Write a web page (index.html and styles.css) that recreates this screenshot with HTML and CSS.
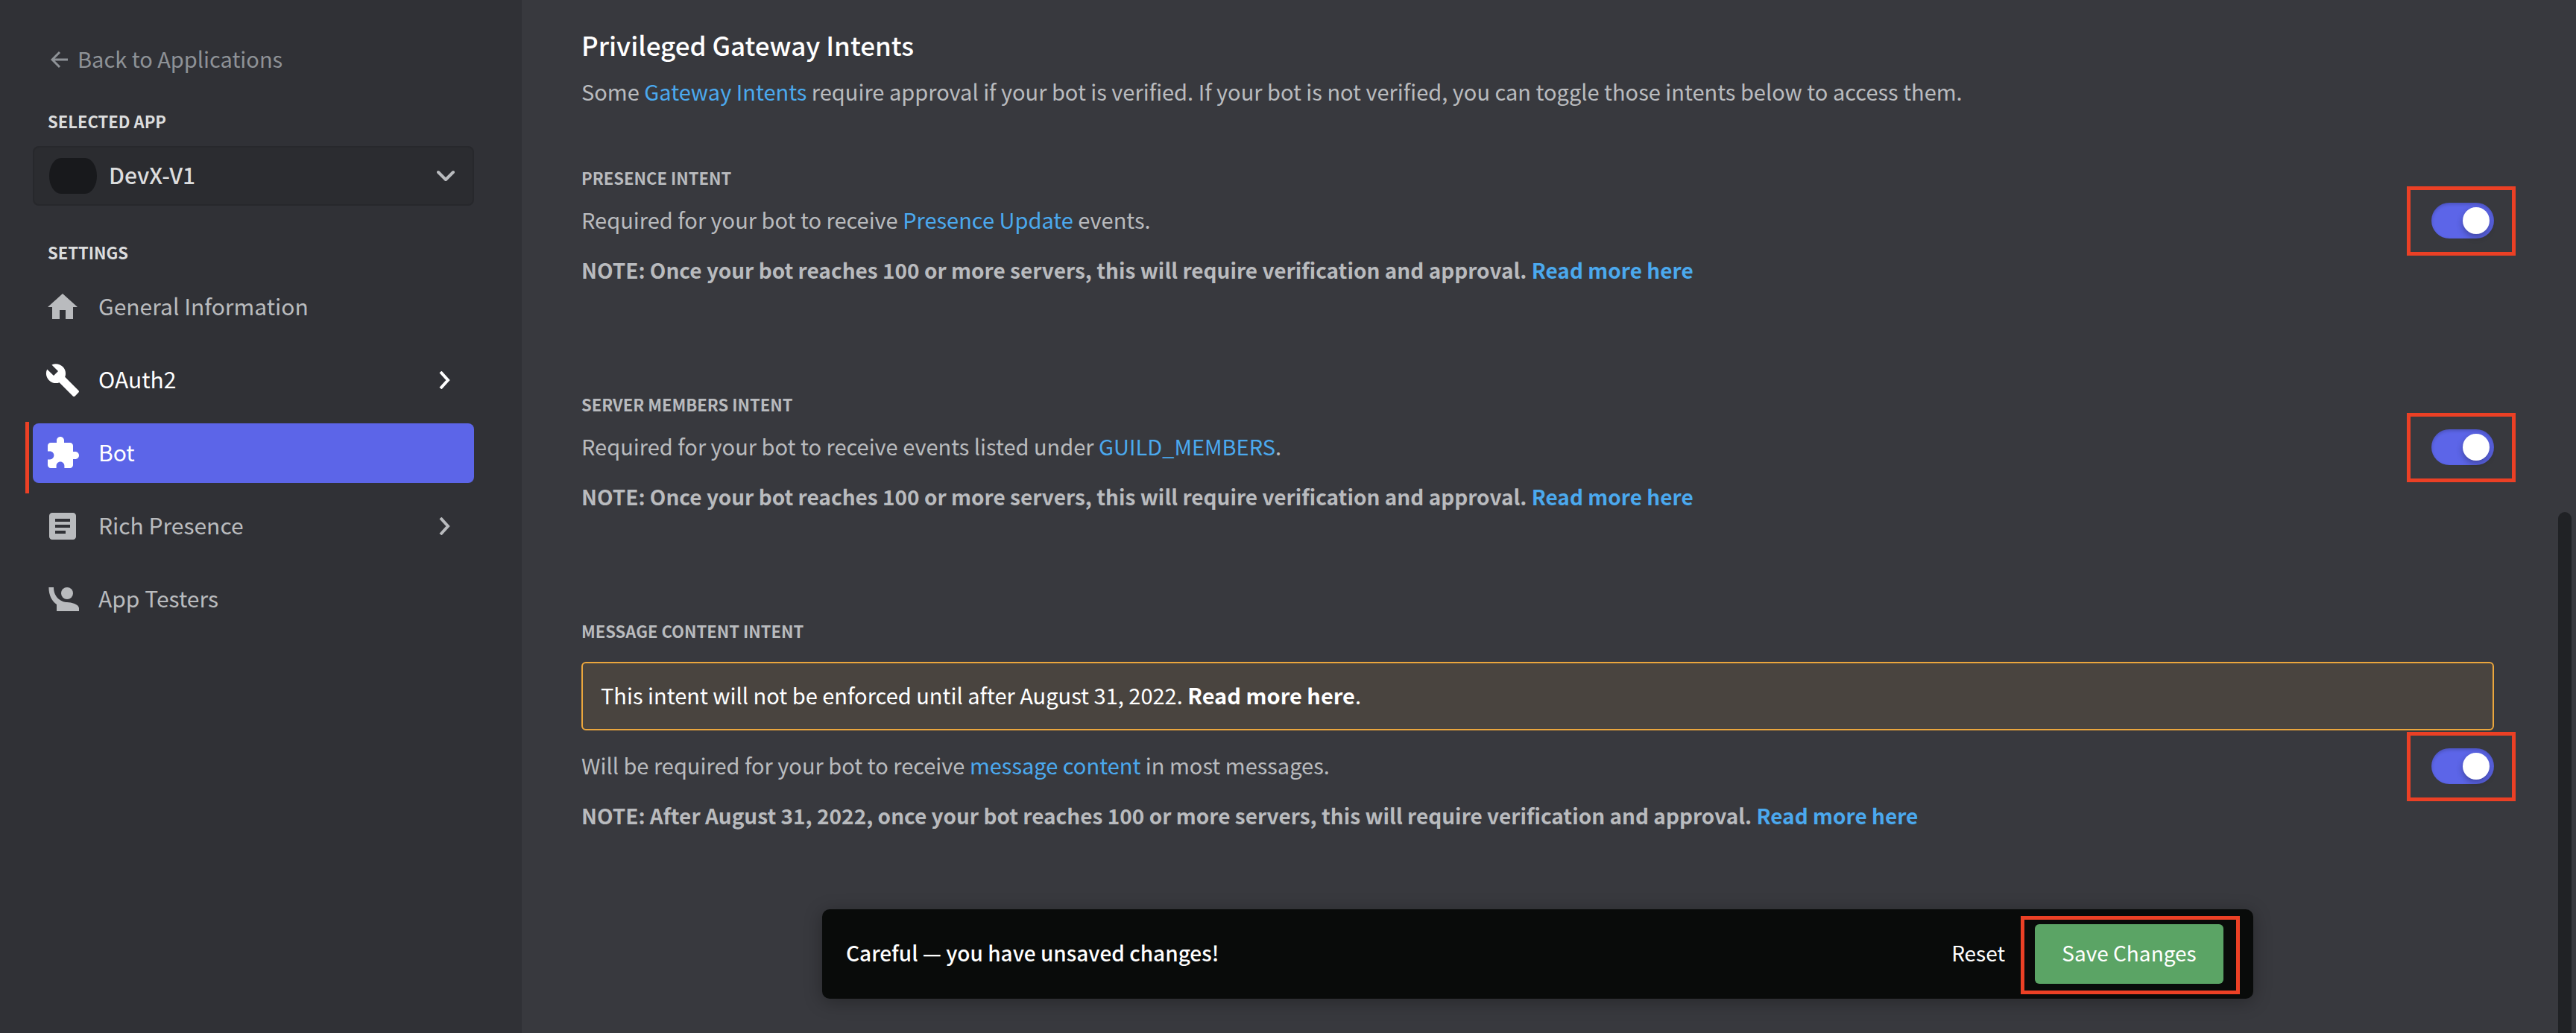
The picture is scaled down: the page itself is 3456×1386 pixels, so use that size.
FILE: index.html
```html
<!DOCTYPE html>
<html lang="en">
<head>
<meta charset="utf-8">
<meta name="viewport" content="width=device-width, initial-scale=1">
<title>Bot settings</title>
<link rel="stylesheet" href="styles.css">
</head>
<body>
<div class="app">
  <aside class="sidebar">
    <a class="back" href="#">
      <svg class="back-arrow" viewBox="0 0 24 24" aria-hidden="true"><path d="M23 12H2M12 2 2 12l10 10"/></svg>
      <span class="label">Back to Applications</span>
    </a>

    <h2 class="side-heading">Selected App</h2>
    <button class="app-picker" type="button" aria-haspopup="listbox">
      <span class="avatar"></span>
      <span class="label">DevX-V1</span>
      <svg class="picker-arrow" viewBox="0 0 24 16" aria-hidden="true"><path d="m2 3 10 10L22 3"/></svg>
    </button>

    <h2 class="side-heading">Settings</h2>
    <nav class="nav">
      <a class="nav-item" href="#">
        <svg class="icon" viewBox="0 0 24 24" aria-hidden="true"><path d="M10 20v-6h4v6h5v-8h3L12 3 2 12h3v8z"/></svg>
        <span class="label">General Information</span>
      </a>
      <a class="nav-item nav-item-bright" href="#">
        <svg class="icon" viewBox="0 0 24 24" aria-hidden="true"><path d="M22.7 19l-9.1-9.1c.9-2.3.4-5-1.5-6.9-2-2-5-2.4-7.4-1.3L9 6 6 9 1.6 4.7C.4 7.1.9 10.1 2.9 12.1c1.9 1.9 4.6 2.4 6.9 1.5l9.1 9.1c.4.4 1 .4 1.4 0l2.3-2.3c.5-.4.5-1.1.1-1.4z"/></svg>
        <span class="label">OAuth2</span>
        <svg class="more" viewBox="0 0 16 24" aria-hidden="true"><path d="m3 1 10 11L3 23"/></svg>
      </a>
      <a class="nav-item nav-item-active" href="#" aria-current="page">
        <svg class="icon" viewBox="0 0 24 24" aria-hidden="true"><path d="M20.5 11H19V7c0-1.1-.9-2-2-2h-4V3.5C13 2.12 11.88 1 10.5 1S8 2.12 8 3.5V5H4c-1.1 0-1.99.9-1.99 2v3.8H3.5c1.49 0 2.7 1.21 2.7 2.7s-1.21 2.7-2.7 2.7H2V20c0 1.1.9 2 2 2h3.8v-1.5c0-1.49 1.21-2.7 2.7-2.7 1.49 0 2.7 1.21 2.7 2.7V22H17c1.1 0 2-.9 2-2v-4h1.5c1.38 0 2.5-1.12 2.5-2.5S21.88 11 20.5 11z"/></svg>
        <span class="label">Bot</span>
      </a>
      <a class="nav-item" href="#">
        <svg class="icon" viewBox="0 0 24 24" aria-hidden="true"><path d="M19 3H5c-1.1 0-2 .9-2 2v14c0 1.1.9 2 2 2h14c1.1 0 2-.9 2-2V5c0-1.1-.9-2-2-2zm-5 14H7v-2h7v2zm3-4H7v-2h10v2zm0-4H7V7h10v2z"/></svg>
        <span class="label">Rich Presence</span>
        <svg class="more" viewBox="0 0 16 24" aria-hidden="true"><path d="m3 1 10 11L3 23"/></svg>
      </a>
      <a class="nav-item" href="#">
        <svg class="icon" viewBox="0 0 24 24" aria-hidden="true"><circle cx="15" cy="8" r="4"/><path d="M23 20v-2c0-2.66-5.33-4-8-4-3.33 0-9-2.7-9-10H2.7C2.7 9.500 5 13.500 8 15.500V20z"/></svg>
        <span class="label">App Testers</span>
      </a>
    </nav>
  </aside>

  <main class="main">
    <h1 class="title">Privileged Gateway Intents</h1>
    <p class="label intro">Some <a href="#">Gateway Intents</a> require approval if your bot is verified. If your bot is not verified, you can toggle those intents below to access them.</p>

    <div class="intents">
      <section class="intent">
        <h3 class="intent-name" id="presence">Presence Intent</h3>
        <div class="intent-row">
          <p class="label">Required for your bot to receive <a href="#">Presence Update</a> events.</p>
          <div class="marked"><input class="switch" type="checkbox" role="switch" aria-labelledby="presence" checked></div>
        </div>
        <p class="label note">NOTE: Once your bot reaches 100 or more servers, this will require verification and approval. <a href="#">Read more here</a></p>
      </section>

      <section class="intent">
        <h3 class="intent-name" id="members">Server Members Intent</h3>
        <div class="intent-row">
          <p class="label">Required for your bot to receive events listed under <a href="#">GUILD_MEMBERS</a>.</p>
          <div class="marked"><input class="switch" type="checkbox" role="switch" aria-labelledby="members" checked></div>
        </div>
        <p class="label note">NOTE: Once your bot reaches 100 or more servers, this will require verification and approval. <a href="#">Read more here</a></p>
      </section>

      <section class="intent">
        <h3 class="intent-name" id="content">Message Content Intent</h3>
        <div class="banner">
          <p class="label">This intent will not be enforced until after August 31, 2022. <a href="#">Read more here</a>.</p>
        </div>
        <div class="intent-row">
          <p class="label">Will be required for your bot to receive <a href="#">message content</a> in most messages.</p>
          <div class="marked"><input class="switch" type="checkbox" role="switch" aria-labelledby="content" checked></div>
        </div>
        <p class="label note">NOTE: After August 31, 2022, once your bot reaches 100 or more servers, this will require verification and approval. <a href="#">Read more here</a></p>
      </section>
    </div>

    <div class="save-bar">
      <p class="label save-text">Careful — you have unsaved changes!</p>
      <button class="reset" type="button">Reset</button>
      <div class="marked marked-save"><button class="save" type="button">Save Changes</button></div>
    </div>
  </main>
</div>
<div class="scroll-thumb"></div>
</body>
</html>
```
FILE: styles.css
```css
* {
  box-sizing: border-box;
}

body {
  margin: 0;
  background: #38393e;
  color: #b9bbbe;
  font-family: "Noto Sans CJK SC", "Noto Sans", sans-serif;
  font-size: 29px;
  line-height: 36px;
}

h1,
h2,
h3,
p {
  margin: 0;
}

a {
  color: #4ba9ee;
  text-decoration: none;
}

button {
  border: 0;
  font: inherit;
  cursor: pointer;
}

/* The face sits low in its line box; the padding below centres it */
.label {
  padding-bottom: 4px;
}

.app {
  display: grid;
  grid-template-columns: 700px 1fr;
  min-height: 100vh;
}

/* Sidebar */

.sidebar {
  padding: 60px 64px 60px 44px;
  background: #303136;
}

.back {
  display: flex;
  align-items: center;
  gap: 12px;
  padding-left: 24px;
  color: #8e9297;
}

.back-arrow {
  width: 24px;
  height: 24px;
  fill: none;
  stroke: currentColor;
  stroke-width: 3;
}

.side-heading {
  margin: 46px 0 18px 20px;
  color: #dcddde;
  font-size: 22px;
  font-weight: 700;
  line-height: 32px;
  text-transform: uppercase;
}

.app-picker {
  display: flex;
  align-items: center;
  gap: 16px;
  width: 100%;
  height: 80px;
  padding: 0 24px 0 20px;
  border: 2px solid #27282c;
  border-radius: 8px;
  background: #2b2c30;
  color: #dcddde;
  font-size: 30px;
  font-weight: 500;
}

.avatar {
  width: 64px;
  height: 48px;
  border-radius: 16px / 24px;
  background: #18191c;
}

.picker-arrow {
  width: 24px;
  height: 16px;
  margin-left: auto;
  fill: none;
  stroke: #b9bbbe;
  stroke-width: 4;
  stroke-linecap: round;
  stroke-linejoin: round;
}

.nav {
  display: grid;
  gap: 18px;
}

.nav-item {
  position: relative;
  display: flex;
  align-items: center;
  gap: 24px;
  height: 80px;
  padding: 0 30px 0 16px;
  border-radius: 8px;
  color: #b9bbbe;
  font-size: 30px;
}

.nav-item-bright,
.nav-item-active {
  color: #fff;
}

.nav-item-active {
  background: #5c65e8;
}

.nav-item-active::before {
  content: "";
  position: absolute;
  top: -2px;
  bottom: -14px;
  left: -10px;
  width: 5px;
  background: #eb4025;
}

.icon {
  width: 48px;
  height: 48px;
  fill: currentColor;
}

.more {
  width: 20px;
  height: 24px;
  margin-left: auto;
  fill: none;
  stroke: currentColor;
  stroke-width: 4;
}

/* Main column */

.main {
  padding: 36px 110px 46px 80px;
}

.title {
  color: #fff;
  font-size: 35px;
  font-weight: 500;
  line-height: 48px;
}

.intro {
  margin: 20px 0 78px;
}

.intents {
  display: grid;
  gap: 142px;
}

.intent-name {
  margin-bottom: 18px;
  font-size: 22px;
  font-weight: 700;
  line-height: 32px;
  text-transform: uppercase;
}

.intent-row {
  display: flex;
  align-items: center;
  justify-content: space-between;
  margin-bottom: 24px;
}

.note {
  font-size: 28px;
  font-weight: 700;
}

.banner {
  margin: 26px 0 24px;
  padding: 24px;
  border: 2px solid #eaa63d;
  border-radius: 6px;
  background: #49443f;
  color: #fff;
}

.banner a {
  color: inherit;
  font-weight: 700;
}

/* Red outline drawn round a control */

.marked {
  position: relative;
  display: flex;
}

.marked::after {
  content: "";
  position: absolute;
  inset: -22px -29px -23px -33px;
  border: 5px solid #eb4025;
  pointer-events: none;
}

.marked-save::after {
  inset: -11px -22px -14px -19px;
}

.switch {
  width: 84px;
  height: 48px;
  margin: 0;
  padding: 6px;
  border-radius: 24px;
  background: #4f545c;
  box-shadow: inset 0 2px 4px rgba(0, 0, 0, 0.2);
  appearance: none;
  cursor: pointer;
}

.switch::before {
  content: "";
  display: block;
  width: 36px;
  height: 36px;
  border-radius: 50%;
  background: #fff;
  box-shadow: 0 4px 8px rgba(0, 0, 0, 0.3);
}

.switch:checked {
  background: #5c65e8;
}

.switch:checked::before {
  margin-left: auto;
}

/* Unsaved changes bar */

.save-bar {
  position: sticky;
  bottom: 46px;
  display: flex;
  align-items: center;
  max-width: 1920px;
  height: 120px;
  margin: 104px auto 0;
  padding: 0 40px 0 32px;
  border-radius: 10px;
  background: #090b0a;
  box-shadow: 0 4px 24px rgba(0, 0, 0, 0.3);
  color: #fff;
  font-size: 28px;
}

.save-text {
  margin-right: auto;
  font-weight: 500;
}

.reset {
  padding: 0 40px 4px;
  background: none;
  color: inherit;
}

.save {
  width: 253px;
  height: 80px;
  padding: 0 0 4px;
  border-radius: 6px;
  background: #5ba465;
  color: #fff;
}

.scroll-thumb {
  position: fixed;
  top: calc(50% - 6px);
  right: 6px;
  bottom: 0;
  width: 18px;
  border-radius: 9px 9px 0 0;
  background: #202225;
}
```
